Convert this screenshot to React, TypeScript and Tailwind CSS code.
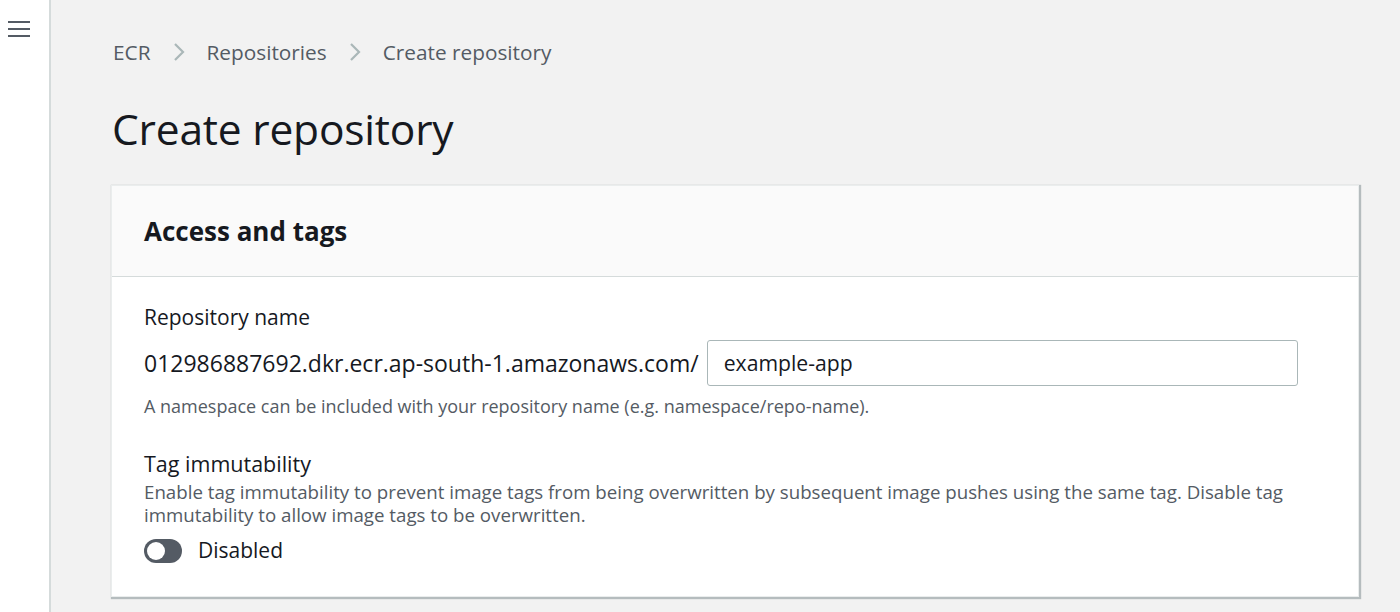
// --- ECR / Create repository — access & tags form ---

const font = { fontFamily: '"Open Sans", "Noto Sans", sans-serif' }

function Chevron() {
  return (
    <svg width="14" height="22" viewBox="0 0 14 22" className="mx-[21px]">
      <path d="M3 3 L11 11 L3 19" fill="none" stroke="#aab7b8" strokeWidth="2.2" />
    </svg>
  )
}

function Toggle() {
  return (
    <span className="relative inline-flex h-[24px] w-[38px] items-center rounded-full bg-[#545b64]">
      <span className="absolute left-[3px] h-[18px] w-[18px] rounded-full bg-white" />
    </span>
  )
}

export default function App() {
  return (
    <div className="flex h-[612px] w-[1400px] overflow-hidden bg-[#f2f2f2] text-[#16191f]" style={font}>
      {/* --- Side nav rail --- */}
      <div className="w-[51px] shrink-0 border-r-2 border-[#d5dbdb] bg-white pt-[21px] pl-[8px]">
        <div className="flex w-[22px] flex-col gap-[5px]">
          <span className="h-[2px] bg-[#545b64]" />
          <span className="h-[2px] bg-[#545b64]" />
          <span className="h-[2px] bg-[#545b64]" />
        </div>
      </div>

      {/* --- Main --- */}
      <div className="flex-1 pl-[60px] pr-[41px]">
        <nav className="mt-[37px] ml-[2px] flex items-center text-[20.8px] leading-[30px] text-[#545b64]">
          <span>ECR</span>
          <Chevron />
          <span>Repositories</span>
          <Chevron />
          <span>Create repository</span>
        </nav>

        <h1 className="mt-[34px] ml-[1px] text-[42.5px] leading-[56px] font-normal tracking-[-0.2px]">Create repository</h1>

        <section className="mt-[28px] w-[1248px] border border-[#eaeded] bg-white shadow-[1px_1px_1px_1px_rgba(0,28,36,0.25)]">
          <div className="flex h-[91px] items-center border-b border-[#d5dbdb] bg-[#fafafa] px-[32px]">
            <h2 className="text-[26px] font-bold">Access and tags</h2>
          </div>

          <div className="px-[32px] pt-[25px] pb-[29px]">
            <div className="text-[21px] leading-[30px]">Repository name</div>
            <div className="mt-[8px] flex items-center gap-[8px]">
              <span className="text-[23px]">012986887692.dkr.ecr.ap-south-1.amazonaws.com/</span>
              <div className="flex h-[46px] w-[591px] items-center rounded-[3px] border border-[#aab7b8] px-[16px] text-[21.2px]">
                example-app
              </div>
            </div>
            <p className="mt-[8px] text-[18px] leading-[24px] text-[#545b64]">
              A namespace can be included with your repository name (e.g. namespace/repo-name).
            </p>

            <div className="mt-[31px] text-[21.5px] leading-[30px]">Tag immutability</div>
            <p className="mt-[1px] text-[18.7px] leading-[23px] text-[#545b64]">
              Enable tag immutability to prevent image tags from being overwritten by subsequent image pushes using the same tag. Disable tag
              <br />
              immutability to allow image tags to be overwritten.
            </p>
            <div className="mt-[9px] flex items-center gap-[16px]">
              <Toggle />
              <span className="text-[21px]">Disabled</span>
            </div>
          </div>
        </section>
      </div>
    </div>
  )
}
